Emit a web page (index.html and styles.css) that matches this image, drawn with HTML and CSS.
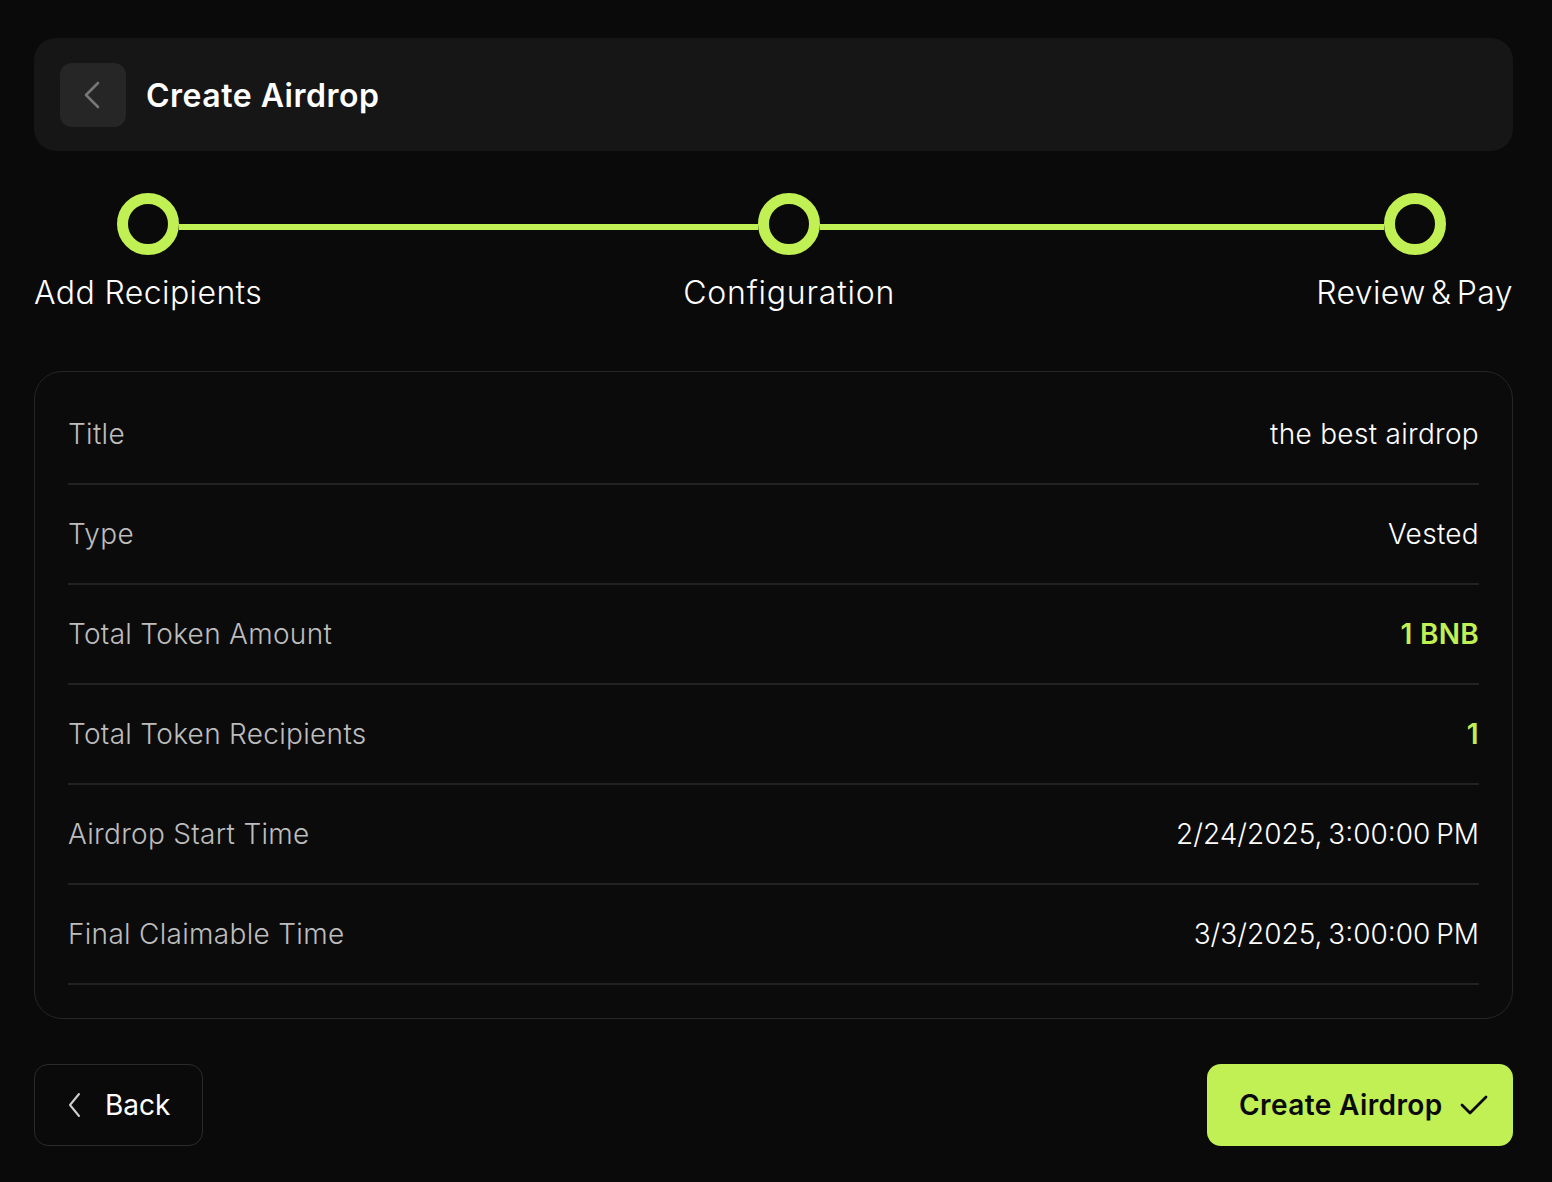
FILE: index.html
```html
<!DOCTYPE html>
<html lang="en">
<head>
<meta charset="utf-8">
<title>Create Airdrop</title>
<link rel="stylesheet" href="styles.css">
</head>
<body>
<div class="page">
  <header class="topbar">
    <button class="icon-btn" aria-label="Back">
      <svg width="22" height="30" viewBox="0 0 22 30" fill="none"><path d="M17 3 L5 15 L17 27" stroke="#777777" stroke-width="2.6" stroke-linecap="round" stroke-linejoin="round"/></svg>
    </button>
    <h1 class="topbar-title">Create Airdrop</h1>
  </header>

  <div class="stepper">
    <div class="step">
      <div class="track"><span class="seg seg-hidden"></span><span class="dot"></span><span class="seg"></span></div>
      <div class="step-label">Add Recipients</div>
    </div>
    <div class="connector"></div>
    <div class="step">
      <div class="track"><span class="seg"></span><span class="dot"></span><span class="seg"></span></div>
      <div class="step-label step-label-wide">Configuration</div>
    </div>
    <div class="connector"></div>
    <div class="step">
      <div class="track"><span class="seg"></span><span class="dot"></span><span class="seg seg-hidden"></span></div>
      <div class="step-label step-label-tight">Review &amp; Pay</div>
    </div>
  </div>

  <section class="card">
    <div class="row"><span class="row-label">Title</span><span class="row-value">the best airdrop</span></div>
    <div class="row"><span class="row-label">Type</span><span class="row-value">Vested</span></div>
    <div class="row"><span class="row-label">Total Token Amount</span><span class="row-value accent">1 BNB</span></div>
    <div class="row"><span class="row-label">Total Token Recipients</span><span class="row-value accent">1</span></div>
    <div class="row"><span class="row-label">Airdrop Start Time</span><span class="row-value date">2/24/2025, 3:00:00 PM</span></div>
    <div class="row"><span class="row-label">Final Claimable Time</span><span class="row-value date">3/3/2025, 3:00:00 PM</span></div>
  </section>

  <div class="actions">
    <button class="btn btn-outline">
      <svg width="16" height="26" viewBox="0 0 16 26" fill="none"><path d="M12 2 L3 13 L12 24" stroke="#cfcfcf" stroke-width="2" stroke-linecap="round" stroke-linejoin="round"/></svg>
      <span>Back</span>
    </button>
    <button class="btn btn-primary">
      <span>Create Airdrop</span>
      <svg width="30" height="24" viewBox="0 0 30 24" fill="none"><path d="M3 12 L11 20 L27 4" stroke="#0a0a0a" stroke-width="2.8" stroke-linecap="round" stroke-linejoin="round"/></svg>
    </button>
  </div>
</div>
</body>
</html>
```

FILE: styles.css
```css
* { box-sizing: border-box; }
html, body { margin: 0; padding: 0; }
body {
  background: #0a0a0a;
  font-family: "Inter", "Noto Sans", sans-serif;
  color: #ffffff;
  width: 1552px;
  min-height: 1182px;
}
.page {
  width: 1479px;
  margin-left: 34px;
  padding-top: 38px;
}
.topbar {
  height: 113px;
  background: #161616;
  border-radius: 22px;
  display: flex;
  align-items: center;
  padding-left: 26px;
  gap: 20px;
}
.icon-btn {
  width: 66px;
  height: 64px;
  border: 0;
  border-radius: 12px;
  background: #262626;
  display: flex;
  align-items: center;
  justify-content: center;
  padding: 0;
  padding-right: 2px;
}
.topbar-title {
  margin: 0;
  font-size: 32px;
  font-weight: 600;
  letter-spacing: 0.5px;
  color: #ffffff;
  padding-top: 2px;
}
.stepper {
  display: grid;
  grid-template-columns: auto 1fr auto 1fr auto;
  margin-top: 42px;
}
.step {
  display: flex;
  flex-direction: column;
  align-items: center;
}
.track {
  display: flex;
  align-items: flex-start;
  width: 100%;
  height: 62px;
}
.seg {
  flex: 1;
  height: 6px;
  margin-top: 31px;
  background: #c1f055;
}
.seg-hidden { background: transparent; }
.dot {
  width: 62px;
  height: 62px;
  border-radius: 50%;
  border: 11px solid #c1f055;
  background: #0a0a0a;
  flex: none;
}
.connector {
  height: 6px;
  background: #c1f055;
  margin-top: 31px;
}
.step-label {
  margin-top: 16px;
  font-size: 32px;
  font-weight: 300;
  letter-spacing: 0.4px;
  color: #ffffff;
  line-height: 44px;
  white-space: nowrap;
}
.step-label-wide { letter-spacing: 0.8px; }
.step-label-tight { word-spacing: -4px; }
.card {
  margin-top: 56px;
  border: 1px solid #262626;
  border-radius: 28px;
  background: #0b0b0b;
  padding: 13px 33px 33px;
}
.row {
  height: 100px;
  border-bottom: 2px solid #222222;
  display: flex;
  align-items: center;
  justify-content: space-between;
  font-size: 28px;
  letter-spacing: 0.3px;
}
.row-label {
  color: #bdbdbd;
  font-weight: 300;
}
.row-value {
  color: #ffffff;
  font-weight: 300;
}
.row-value.date {
  letter-spacing: 0;
  word-spacing: -2px;
}
.row-value.accent {
  color: #c1f055;
  font-weight: 600;
}
.actions {
  display: flex;
  justify-content: space-between;
  margin-top: 45px;
}
.btn {
  height: 82px;
  border-radius: 14px;
  display: flex;
  align-items: center;
  font-family: inherit;
  font-size: 28px;
  cursor: pointer;
}
.btn-outline {
  width: 169px;
  background: transparent;
  border: 1px solid #2a2a2a;
  color: #ffffff;
  padding: 0 0 0 32px;
  gap: 22px;
  font-weight: 400;
}
.btn-primary {
  width: 306px;
  background: #c1f055;
  border: 0;
  color: #0a0a0a;
  font-weight: 600;
  letter-spacing: 0.4px;
  padding: 0 0 0 32px;
  gap: 16px;
}
```
